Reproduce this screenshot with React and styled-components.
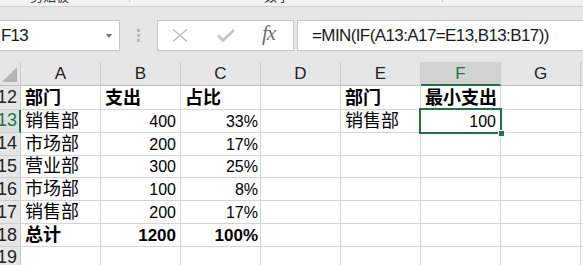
import React from "react";
import styled, { createGlobalStyle } from "styled-components";

const GREEN = "#217346";
const GRID = "#d4d4d4";

const columns = ["A", "B", "C", "D", "E", "F", "G", "H"];

const rows = [
  { n: 12, bold: true, cells: ["部门", "支出", "占比", "", "部门", "最小支出"] },
  { n: 13, cells: ["销售部", "400", "33%", "", "销售部", "100"] },
  { n: 14, cells: ["市场部", "200", "17%"] },
  { n: 15, cells: ["营业部", "300", "25%"] },
  { n: 16, cells: ["市场部", "100", "8%"] },
  { n: 17, cells: ["销售部", "200", "17%"] },
  { n: 18, bold: true, cells: ["总计", "1200", "100%"] },
  { n: 19, cells: [] },
];

const isNumber = (v) => /^[\d.]+%?$/.test(v);

const App = () => {
  return (
    <>
      <GlobalStyle />
      <Window>
        <Ribbon>
          <RibbonLabel $left={30}>剪贴板</RibbonLabel>
          <RibbonTick $left={60} />
          <RibbonLabel $left={134}>数字</RibbonLabel>
          <RibbonTick $left={152} />
        </Ribbon>
        <FormulaBar>
          <NameBox>
            <NameText>F13</NameText>
            <DropArrow />
          </NameBox>
          <Grip>
            <GripDot />
            <GripDot />
            <GripDot />
          </Grip>
          <ButtonBox>
            <svg width="16" height="13" viewBox="0 0 16 13">
              <path d="M1 0.5 L15 12.5 M15 0.5 L1 12.5" stroke="#bcbcbc" strokeWidth="1.4" fill="none" />
            </svg>
            <CheckIcon width="18" height="13" viewBox="0 0 18 13">
              <path d="M1 6.5 L6 11.5 L17 1" stroke="#c2c2c2" strokeWidth="2.6" fill="none" />
            </CheckIcon>
            <FxLabel>fx</FxLabel>
          </ButtonBox>
          <FormulaInput>=MIN(IF(A13:A17=E13,B13:B17))</FormulaInput>
        </FormulaBar>
        <Sheet>
          <Corner>
            <CornerTriangle />
          </Corner>
          {columns.map((c) => (
            <ColHeader key={c} $active={c === "F"}>
              {c === "H" ? "" : c}
            </ColHeader>
          ))}
          {rows.map((row) => [
            <RowHeader key={`h${row.n}`} $active={row.n === 13}>
              {row.n}
            </RowHeader>,
            ...columns.map((c, i) => {
              const value = row.cells[i] || "";
              const num = isNumber(value);
              const selected = row.n === 13 && c === "F";
              return (
                <Cell
                  key={`${row.n}${c}`}
                  $num={num}
                  $pct={value.endsWith("%")}
                  $bold={row.bold}
                  $selected={selected}
                >
                  {value}
                  {selected && (
                    <>
                      <Selection />
                      <FillHandle />
                    </>
                  )}
                </Cell>
              );
            }),
          ])}
        </Sheet>
      </Window>
    </>
  );
};

const GlobalStyle = createGlobalStyle`
  html, body {
    margin: 0;
    padding: 0;
    background: #ffffff;
    overflow: hidden;
  }
  body {
    font-family: "Liberation Sans", "Noto Sans CJK SC", sans-serif;
    color: #000;
  }
`;

const Window = styled.div`
  width: 583px;
  height: 265px;
  overflow: hidden;
  background: #ffffff;
`;

const Ribbon = styled.div`
  display: flex;
  align-items: flex-end;
  height: 6px;
  background: #f3f3f3;
  border-bottom: 1px solid #d0d0d0;
  overflow: hidden;
`;

const RibbonLabel = styled.span`
  margin-left: ${(p) => p.$left}px;
  margin-bottom: 3px;
  font-size: 13px;
  line-height: 13px;
  color: #333;
  white-space: nowrap;
`;

const RibbonTick = styled.span`
  align-self: flex-start;
  margin-left: ${(p) => p.$left}px;
  width: 1px;
  height: 2px;
  background: #c4c4c4;
`;

const FormulaBar = styled.div`
  display: flex;
  align-items: flex-start;
  height: 55px;
  padding-top: 13px;
  box-sizing: border-box;
  background: #e6e6e6;
`;

const boxBase = `
  height: 31px;
  box-sizing: border-box;
  background: #ffffff;
  border: 1px solid #c6c6c6;
  display: flex;
  align-items: center;
`;

const NameBox = styled.div`
  ${boxBase}
  margin-left: -2px;
  width: 122px;
  padding: 0 7px 0 2px;
`;

const NameText = styled.span`
  font-size: 17px;
  letter-spacing: -0.8px;
  color: #1a1a1a;
`;

const DropArrow = styled.span`
  margin-left: auto;
  width: 0;
  height: 0;
  border-left: 3.5px solid transparent;
  border-right: 3.5px solid transparent;
  border-top: 4px solid #6f6f6f;
`;

const Grip = styled.div`
  display: flex;
  flex-direction: column;
  gap: 2px;
  margin: 9px 0 0 17px;
`;

const GripDot = styled.span`
  width: 3px;
  height: 3px;
  background: #b5b5b5;
`;

const ButtonBox = styled.div`
  ${boxBase}
  margin-left: 17px;
  width: 137px;
  padding-left: 14px;
`;

const CheckIcon = styled.svg`
  margin-left: 29px;
`;

const FxLabel = styled.span`
  margin-left: 27px;
  margin-top: -4px;
  font-family: "Liberation Serif", serif;
  font-style: italic;
  font-size: 21px;
  color: #6e6e6e;
  letter-spacing: -1px;
`;

const FormulaInput = styled.div`
  ${boxBase}
  flex: 1;
  margin-left: 3px;
  margin-right: -4px;
  padding-left: 14px;
  font-size: 17px;
  letter-spacing: -0.6px;
  color: #1a1a1a;
  white-space: nowrap;
`;

const Sheet = styled.div`
  display: grid;
  grid-template-columns: 21px repeat(8, 80px);
  grid-template-rows: 24px 24px repeat(7, 22.83px);
`;

const Corner = styled.div`
  position: relative;
  background: #e6e6e6;
  border-right: 1px solid #cdcdcd;
  border-bottom: 1px solid #bdbdbd;
  box-sizing: border-box;
`;

const CornerTriangle = styled.div`
  position: absolute;
  right: 3px;
  bottom: 3px;
  width: 0;
  height: 0;
  border-left: 15px solid transparent;
  border-bottom: 15px solid #b4b4b4;
`;

const ColHeader = styled.div`
  display: flex;
  align-items: center;
  justify-content: center;
  box-sizing: border-box;
  background: ${(p) => (p.$active ? "#d2d2d2" : "#e6e6e6")};
  color: ${(p) => (p.$active ? GREEN : "#222")};
  border-right: 1px solid #cdcdcd;
  border-bottom: ${(p) => (p.$active ? `2px solid ${GREEN}` : "1px solid #bdbdbd")};
  font-size: 17px;
  padding-top: ${(p) => (p.$active ? "1px" : "0")};
`;

const RowHeader = styled.div`
  display: flex;
  align-items: center;
  justify-content: flex-end;
  box-sizing: border-box;
  overflow: hidden;
  padding-right: ${(p) => (p.$active ? "2px" : "3px")};
  background: ${(p) => (p.$active ? "#dedede" : "#e6e6e6")};
  color: ${(p) => (p.$active ? GREEN : "#222")};
  border-right: ${(p) => (p.$active ? `2px solid ${GREEN}` : "1px solid #c6c6c6")};
  border-bottom: 1px solid #cfcfcf;
  font-size: 18px;
  white-space: nowrap;
`;

const Cell = styled.div`
  position: ${(p) => (p.$selected ? "relative" : "static")};
  display: flex;
  align-items: flex-end;
  justify-content: ${(p) => (p.$num ? "flex-end" : "flex-start")};
  box-sizing: border-box;
  padding: 0 ${(p) => (p.$pct ? "2px" : "4px")} 2px 4px;
  border-right: 1px solid ${GRID};
  border-bottom: 1px solid ${GRID};
  font-size: ${(p) => (p.$num ? (p.$bold ? "17px" : "16px") : "18px")};
  font-weight: ${(p) => (p.$bold ? 700 : 400)};
  line-height: ${(p) => (p.$num ? "16px" : "18px")};
  white-space: nowrap;
`;

const Selection = styled.div`
  position: absolute;
  top: -2px;
  left: -2px;
  right: -2px;
  bottom: -2px;
  border: 2px solid ${GREEN};
  z-index: 2;
`;

const FillHandle = styled.div`
  position: absolute;
  right: -5px;
  bottom: -5px;
  width: 5px;
  height: 5px;
  background: ${GREEN};
  border: 1px solid #ffffff;
  z-index: 3;
`;

export default App;
